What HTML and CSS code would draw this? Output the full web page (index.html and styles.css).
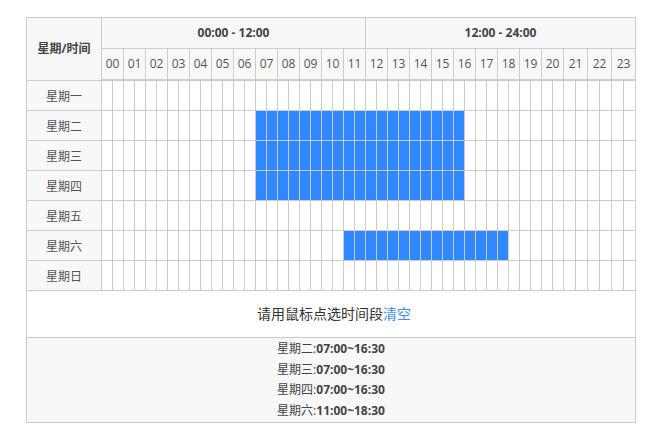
FILE: index.html
```html
<!DOCTYPE html>
<html lang="zh-CN">
<head>
<meta charset="utf-8">
<title>时间段选择</title>
<link rel="stylesheet" href="styles.css">
</head>
<body>
<div class="page">
  <div class="weektime">
    <div class="grid">
      <div class="corner">星期/时间</div>
      <div class="range">00:00 - 12:00</div>
      <div class="range">12:00 - 24:00</div>
      <div class="hour">00</div><div class="hour">01</div><div class="hour">02</div><div class="hour">03</div>
      <div class="hour">04</div><div class="hour">05</div><div class="hour">06</div><div class="hour">07</div>
      <div class="hour">08</div><div class="hour">09</div><div class="hour">10</div><div class="hour">11</div>
      <div class="hour">12</div><div class="hour">13</div><div class="hour">14</div><div class="hour">15</div>
      <div class="hour">16</div><div class="hour">17</div><div class="hour">18</div><div class="hour">19</div>
      <div class="hour">20</div><div class="hour">21</div><div class="hour">22</div><div class="hour">23</div>

      <div class="day">星期一</div>
      <i class="slot"></i><i class="slot"></i><i class="slot"></i><i class="slot"></i><i class="slot"></i><i class="slot"></i>
      <i class="slot"></i><i class="slot"></i><i class="slot"></i><i class="slot"></i><i class="slot"></i><i class="slot"></i>
      <i class="slot"></i><i class="slot"></i><i class="slot"></i><i class="slot"></i><i class="slot"></i><i class="slot"></i>
      <i class="slot"></i><i class="slot"></i><i class="slot"></i><i class="slot"></i><i class="slot"></i><i class="slot"></i>
      <i class="slot"></i><i class="slot"></i><i class="slot"></i><i class="slot"></i><i class="slot"></i><i class="slot"></i>
      <i class="slot"></i><i class="slot"></i><i class="slot"></i><i class="slot"></i><i class="slot"></i><i class="slot"></i>
      <i class="slot"></i><i class="slot"></i><i class="slot"></i><i class="slot"></i><i class="slot"></i><i class="slot"></i>
      <i class="slot"></i><i class="slot"></i><i class="slot"></i><i class="slot"></i><i class="slot"></i><i class="slot"></i>

      <div class="day">星期二</div>
      <i class="slot"></i><i class="slot"></i><i class="slot"></i><i class="slot"></i><i class="slot"></i><i class="slot"></i>
      <i class="slot"></i><i class="slot"></i><i class="slot"></i><i class="slot"></i><i class="slot"></i><i class="slot"></i>
      <i class="slot"></i><i class="slot"></i>
      <i class="slot on"></i><i class="slot on"></i><i class="slot on"></i><i class="slot on"></i><i class="slot on"></i><i class="slot on"></i>
      <i class="slot on"></i><i class="slot on"></i><i class="slot on"></i><i class="slot on"></i><i class="slot on"></i><i class="slot on"></i>
      <i class="slot on"></i><i class="slot on"></i><i class="slot on"></i><i class="slot on"></i><i class="slot on"></i><i class="slot on"></i>
      <i class="slot on"></i>
      <i class="slot"></i><i class="slot"></i><i class="slot"></i><i class="slot"></i><i class="slot"></i><i class="slot"></i>
      <i class="slot"></i><i class="slot"></i><i class="slot"></i><i class="slot"></i><i class="slot"></i><i class="slot"></i>
      <i class="slot"></i><i class="slot"></i><i class="slot"></i>

      <div class="day">星期三</div>
      <i class="slot"></i><i class="slot"></i><i class="slot"></i><i class="slot"></i><i class="slot"></i><i class="slot"></i>
      <i class="slot"></i><i class="slot"></i><i class="slot"></i><i class="slot"></i><i class="slot"></i><i class="slot"></i>
      <i class="slot"></i><i class="slot"></i>
      <i class="slot on"></i><i class="slot on"></i><i class="slot on"></i><i class="slot on"></i><i class="slot on"></i><i class="slot on"></i>
      <i class="slot on"></i><i class="slot on"></i><i class="slot on"></i><i class="slot on"></i><i class="slot on"></i><i class="slot on"></i>
      <i class="slot on"></i><i class="slot on"></i><i class="slot on"></i><i class="slot on"></i><i class="slot on"></i><i class="slot on"></i>
      <i class="slot on"></i>
      <i class="slot"></i><i class="slot"></i><i class="slot"></i><i class="slot"></i><i class="slot"></i><i class="slot"></i>
      <i class="slot"></i><i class="slot"></i><i class="slot"></i><i class="slot"></i><i class="slot"></i><i class="slot"></i>
      <i class="slot"></i><i class="slot"></i><i class="slot"></i>

      <div class="day">星期四</div>
      <i class="slot"></i><i class="slot"></i><i class="slot"></i><i class="slot"></i><i class="slot"></i><i class="slot"></i>
      <i class="slot"></i><i class="slot"></i><i class="slot"></i><i class="slot"></i><i class="slot"></i><i class="slot"></i>
      <i class="slot"></i><i class="slot"></i>
      <i class="slot on"></i><i class="slot on"></i><i class="slot on"></i><i class="slot on"></i><i class="slot on"></i><i class="slot on"></i>
      <i class="slot on"></i><i class="slot on"></i><i class="slot on"></i><i class="slot on"></i><i class="slot on"></i><i class="slot on"></i>
      <i class="slot on"></i><i class="slot on"></i><i class="slot on"></i><i class="slot on"></i><i class="slot on"></i><i class="slot on"></i>
      <i class="slot on"></i>
      <i class="slot"></i><i class="slot"></i><i class="slot"></i><i class="slot"></i><i class="slot"></i><i class="slot"></i>
      <i class="slot"></i><i class="slot"></i><i class="slot"></i><i class="slot"></i><i class="slot"></i><i class="slot"></i>
      <i class="slot"></i><i class="slot"></i><i class="slot"></i>

      <div class="day">星期五</div>
      <i class="slot"></i><i class="slot"></i><i class="slot"></i><i class="slot"></i><i class="slot"></i><i class="slot"></i>
      <i class="slot"></i><i class="slot"></i><i class="slot"></i><i class="slot"></i><i class="slot"></i><i class="slot"></i>
      <i class="slot"></i><i class="slot"></i><i class="slot"></i><i class="slot"></i><i class="slot"></i><i class="slot"></i>
      <i class="slot"></i><i class="slot"></i><i class="slot"></i><i class="slot"></i><i class="slot"></i><i class="slot"></i>
      <i class="slot"></i><i class="slot"></i><i class="slot"></i><i class="slot"></i><i class="slot"></i><i class="slot"></i>
      <i class="slot"></i><i class="slot"></i><i class="slot"></i><i class="slot"></i><i class="slot"></i><i class="slot"></i>
      <i class="slot"></i><i class="slot"></i><i class="slot"></i><i class="slot"></i><i class="slot"></i><i class="slot"></i>
      <i class="slot"></i><i class="slot"></i><i class="slot"></i><i class="slot"></i><i class="slot"></i><i class="slot"></i>

      <div class="day">星期六</div>
      <i class="slot"></i><i class="slot"></i><i class="slot"></i><i class="slot"></i><i class="slot"></i><i class="slot"></i>
      <i class="slot"></i><i class="slot"></i><i class="slot"></i><i class="slot"></i><i class="slot"></i><i class="slot"></i>
      <i class="slot"></i><i class="slot"></i><i class="slot"></i><i class="slot"></i><i class="slot"></i><i class="slot"></i>
      <i class="slot"></i><i class="slot"></i><i class="slot"></i><i class="slot"></i>
      <i class="slot on"></i><i class="slot on"></i><i class="slot on"></i><i class="slot on"></i><i class="slot on"></i><i class="slot on"></i>
      <i class="slot on"></i><i class="slot on"></i><i class="slot on"></i><i class="slot on"></i><i class="slot on"></i><i class="slot on"></i>
      <i class="slot on"></i><i class="slot on"></i><i class="slot on"></i>
      <i class="slot"></i><i class="slot"></i><i class="slot"></i><i class="slot"></i><i class="slot"></i><i class="slot"></i>
      <i class="slot"></i><i class="slot"></i><i class="slot"></i><i class="slot"></i><i class="slot"></i>

      <div class="day">星期日</div>
      <i class="slot"></i><i class="slot"></i><i class="slot"></i><i class="slot"></i><i class="slot"></i><i class="slot"></i>
      <i class="slot"></i><i class="slot"></i><i class="slot"></i><i class="slot"></i><i class="slot"></i><i class="slot"></i>
      <i class="slot"></i><i class="slot"></i><i class="slot"></i><i class="slot"></i><i class="slot"></i><i class="slot"></i>
      <i class="slot"></i><i class="slot"></i><i class="slot"></i><i class="slot"></i><i class="slot"></i><i class="slot"></i>
      <i class="slot"></i><i class="slot"></i><i class="slot"></i><i class="slot"></i><i class="slot"></i><i class="slot"></i>
      <i class="slot"></i><i class="slot"></i><i class="slot"></i><i class="slot"></i><i class="slot"></i><i class="slot"></i>
      <i class="slot"></i><i class="slot"></i><i class="slot"></i><i class="slot"></i><i class="slot"></i><i class="slot"></i>
      <i class="slot"></i><i class="slot"></i><i class="slot"></i><i class="slot"></i><i class="slot"></i><i class="slot"></i>
    </div>
    <div class="hint">请用鼠标点选时间段<a class="clear" href="#">清空</a></div>
    <div class="summary">
      <p>星期二:<b>07:00~16:30</b></p>
      <p>星期三:<b>07:00~16:30</b></p>
      <p>星期四:<b>07:00~16:30</b></p>
      <p>星期六:<b>11:00~18:30</b></p>
    </div>
  </div>
</div>
</body>
</html>
```
FILE: styles.css
```css
* {
  box-sizing: border-box;
  margin: 0;
  padding: 0;
}

body {
  margin: 0;
  background: #fff;
  font-family: "Open Sans", "Noto Sans CJK SC", sans-serif;
  color: #555;
}

.page {
  padding: 17px 0 0 26px;
}

.weektime {
  width: 610px;
  border: 1px solid #ccc;
}

.grid {
  display: grid;
  grid-template-columns: 74px repeat(42, 10px) repeat(6, 11px);
  grid-template-rows: 30px 31px repeat(7, 29px);
  gap: 1px;
  background: #ccc;
}

.corner,
.range,
.hour,
.day {
  display: flex;
  align-items: center;
  justify-content: center;
  background: #f8f8f9;
  font-size: 12px;
  line-height: 1;
}

.corner {
  grid-row: 1 / 3;
  font-weight: bold;
  color: #444;
}

.range {
  grid-column: span 24;
  font-weight: bold;
  color: #444;
}

.hour {
  grid-column: span 2;
  border-bottom: 1px solid #ccc;
}

.day {
  padding-top: 2px;
}

.slot {
  display: block;
  background: #fff;
}

.slot.on {
  background: #2f88ff;
}

.hint {
  border-top: 1px solid #ccc;
  height: 47px;
  line-height: 46px;
  text-align: center;
  font-size: 14px;
  color: #333;
  padding-left: 6px;
}

.clear {
  color: #3f8cff;
  text-decoration: none;
}

.summary {
  border-top: 1px solid #ccc;
  background: #f8f8f9;
  height: 85px;
  padding-top: 1px;
  text-align: center;
  font-size: 12px;
  line-height: 20.7px;
  color: #444;
}

.summary b {
  font-weight: bold;
}
```
